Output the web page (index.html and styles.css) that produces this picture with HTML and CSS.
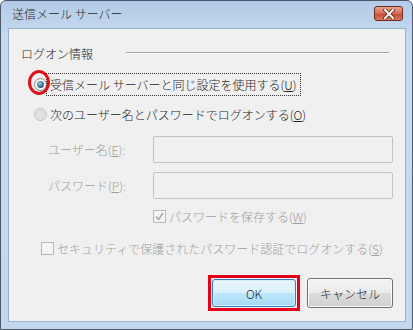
FILE: index.html
```html
<!DOCTYPE html>
<html lang="ja">
<head>
    <meta charset="UTF-8">
    <title>送信メール サーバー</title>
    <link rel="stylesheet" href="styles.css">
</head>
<body>
    <div class="window">
        <div class="titlebar">
            <span class="title">送信メール サーバー</span>
            <button class="close" aria-label="閉じる">
                <svg width="12" height="10" viewBox="0 0 12 10">
                    <path d="M2 1 L10 9 M10 1 L2 9" stroke="#5a1a10" stroke-width="3.4" stroke-linecap="square"/>
                    <path d="M2 1 L10 9 M10 1 L2 9" stroke="#fff" stroke-width="2" stroke-linecap="square"/>
                </svg>
            </button>
        </div>

        <div class="client">
            <div class="group-head">
                <span>ログオン情報</span>
                <span class="rule"></span>
            </div>

            <div class="row radio-row first">
                <span class="highlight-ring"></span>
                <svg class="radio" width="13" height="13" viewBox="0 0 13 13">
                    <defs>
                        <radialGradient id="dot" cx="40%" cy="35%" r="70%">
                            <stop offset="0" stop-color="#8fd0e8"/>
                            <stop offset="1" stop-color="#1b4a5c"/>
                        </radialGradient>
                    </defs>
                    <circle cx="6.5" cy="6.5" r="6" fill="#f4f4f4" stroke="#8b8b8b"/>
                    <circle cx="6.5" cy="6.5" r="3.4" fill="url(#dot)"/>
                </svg>
                <span class="focus">受信メール サーバーと同じ設定を使用する(<u>U</u>)</span>
            </div>

            <div class="row radio-row second">
                <svg class="radio" width="13" height="13" viewBox="0 0 13 13">
                    <circle cx="6.5" cy="6.5" r="6" fill="#f4f4f4" stroke="#b8b8b8"/>
                    <circle cx="6.5" cy="6.5" r="4.3" fill="#e2e2e2" stroke="#d0d0d0"/>
                </svg>
                <span>次のユーザー名とパスワードでログオンする(<u>O</u>)</span>
            </div>

            <div class="row field first-field">
                <label class="disabled">ユーザー名(<u>E</u>):</label>
                <div class="input"></div>
            </div>

            <div class="row field second-field">
                <label class="disabled">パスワード(<u>P</u>):</label>
                <div class="input"></div>
            </div>

            <div class="row check-row save">
                <svg class="check" width="13" height="13" viewBox="0 0 13 13">
                    <rect x="0.5" y="0.5" width="12" height="12" fill="#f4f4f4" stroke="#b8b8b8"/>
                    <path d="M3 6.5 L5.5 9.5 L10 3" fill="none" stroke="#a8a8a8" stroke-width="1.5"/>
                </svg>
                <span class="disabled">パスワードを保存する(<u>W</u>)</span>
            </div>

            <div class="row check-row spa">
                <svg class="check" width="13" height="13" viewBox="0 0 13 13">
                    <rect x="0.5" y="0.5" width="12" height="12" fill="#f4f4f4" stroke="#b8b8b8"/>
                </svg>
                <span class="disabled">セキュリティで保護されたパスワード認証でログオンする(<u>S</u>)</span>
            </div>

            <div class="buttons">
                <div class="ok-ring">
                    <button class="btn ok">OK</button>
                </div>
                <button class="btn">キャンセル</button>
            </div>
        </div>
    </div>
</body>
</html>
```

FILE: styles.css
```css
body {
    margin: 0;
    padding: 0;
    font-family: "Noto Sans CJK JP", "Noto Sans", sans-serif;
    font-size: 12px;
    font-weight: 300;
    color: #1e1e1e;
    background: #fff;
}
u {
    text-decoration: underline;
    text-underline-offset: 1px;
}
.window {
    width: 413px;
    height: 330px;
    box-sizing: border-box;
    border: 1px solid #4a5a6c;
    border-radius: 6px 6px 0 0;
    background: linear-gradient(#b3cbe6, #c6dbf1 40px, #c3d8ef);
    display: flex;
    flex-direction: column;
}
.titlebar {
    height: 27px;
    display: flex;
    align-items: center;
    justify-content: space-between;
    padding: 0 9px 0 11px;
}
.title {
    color: #1e1e1e;
    font-size: 12px;
    margin-top: -2px;
}
.close {
    width: 29px;
    height: 15px;
    margin-top: -2px;
    padding: 0;
    border: 1px solid #6c2a22;
    border-radius: 3px;
    background: linear-gradient(#e8a493, #d46a52 50%, #c44a32 51%, #d47a5c);
    display: flex;
    align-items: center;
    justify-content: center;
}
.client {
    margin: 0 6px 7px 7px;
    flex: 1;
    border: 1px solid #9ab2cc;
    background: #f0f0f0;
    padding: 16px 0 0 12px;
    display: flex;
    flex-direction: column;
}
.group-head {
    height: 16px;
    display: flex;
    align-items: center;
    gap: 33px;
    padding-right: 16px;
}
.rule {
    flex: 1;
    height: 1px;
    background: #a0a0a0;
    border-bottom: 1px solid #fff;
}
.row {
    display: flex;
    align-items: center;
}
.radio-row {
    height: 24px;
    padding-left: 13px;
    gap: 3px;
    position: relative;
}
.radio-row.first {
    margin-top: 11px;
}
.radio-row.second {
    margin-top: 6px;
}
.radio, .check {
    flex: none;
}
.focus {
    outline: 1px dotted #333;
    outline-offset: 2px;
    padding: 0 1px;
    margin-left: -1px;
}
.highlight-ring {
    position: absolute;
    left: 7px;
    top: -2px;
    width: 16px;
    height: 19px;
    border: 3px solid #e0101a;
    border-radius: 50%;
}
.field {
    height: 27px;
    padding-left: 27px;
}
.field.first-field {
    margin-top: 10px;
}
.field.second-field {
    margin-top: 9px;
}
.field label {
    width: 105px;
}
.input {
    width: 238px;
    height: 25px;
    border: 1px solid #c2c2c2;
    border-radius: 2px;
    background: #f0f0f0;
}
.disabled {
    color: #9d9d9d;
}
.check-row {
    height: 16px;
    gap: 3px;
}
.check-row.save {
    margin-top: 9px;
    padding-left: 132px;
}
.check-row.spa {
    margin-top: 16px;
    padding-left: 20px;
}
.buttons {
    margin-top: 19px;
    display: flex;
    align-items: center;
    padding-left: 187px;
    gap: 7px;
}
.ok-ring {
    border: 3px solid #e2001a;
    padding: 0;
    width: 86px;
    height: 30px;
    display: flex;
    align-items: center;
    justify-content: center;
}
.btn {
    font-family: inherit;
    font-size: 12px;
    font-weight: 300;
    color: #1e1e1e;
    width: 86px;
    height: 30px;
    border: 1px solid #707070;
    border-radius: 3px;
    background: linear-gradient(#f3f3f3, #ebebeb 50%, #dddddd 51%, #cfcfcf);
    box-shadow: inset 0 0 0 1px #fcfcfc;
    padding: 0;
}
.btn.ok {
    width: 84px;
    height: 28px;
    border-color: #3c7fb1;
    background: linear-gradient(#eaf6fd, #d9f0fc 50%, #bee6fd 51%, #a7d9f5);
    box-shadow: inset 0 0 0 1px #d0f0ff;
}
```
